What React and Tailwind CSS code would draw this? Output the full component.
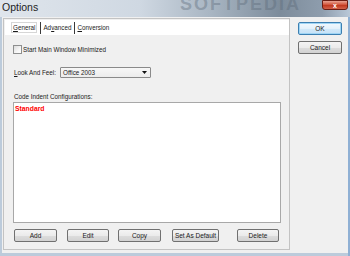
export default function App() {
  const font = { fontFamily: '"Liberation Sans", Arial, sans-serif' };
  const btn =
    "flex items-center justify-center h-[13px] border border-[#707070] rounded-[2px] bg-[linear-gradient(to_bottom,#f4f4f4_0%,#ebebeb_50%,#dddddd_51%,#d2d2d2_100%)] text-[6.5px] text-[#1a1a1a]";
  return (
    <div
      className="w-[350px] h-[256px] overflow-hidden flex flex-col bg-[#bccbdb] relative"
      style={font}
    >
      {/* title bar */}
      <div className="h-[17px] shrink-0 relative bg-[linear-gradient(to_right,#dfe5ec_0%,#cfd8e2_40%,#a9b6c3_60%,#7d8c9b_80%,#8e9dad_92%,#b9c8d8_100%)] overflow-hidden">
        <span className="absolute left-[2px] top-[1px] text-[10.5px] leading-[13px] text-[#1e1e1e]">
          Options
        </span>
        <span className="absolute left-[180px] top-[-5px] text-[18px] font-bold tracking-[2px] text-[#5a6877]/40 leading-[18px]">
          SOFTPEDIA
        </span>
        <div className="absolute left-[322px] top-0 w-[26px] h-[10px] rounded-b-[3px] border border-[#6b1d12] bg-[linear-gradient(to_bottom,#e8a493_0%,#d3563c_45%,#c13a20_55%,#d2624a_100%)] flex items-center justify-center">
          <span className="text-white text-[7px] font-bold leading-[7px]">x</span>
        </div>
      </div>

      {/* client */}
      <div className="flex-1 flex flex-row ml-[2px] mr-[2px] mb-[3px] bg-[#f0f0f0]">
        {/* left panel */}
        <div className="w-[287px] ml-[1px] mt-[1px] mb-[3px] border border-[#c3c3c3] flex flex-col">
          {/* tab strip */}
          <div className="h-[15px] mt-[1px] ml-[1px] bg-white flex items-center text-[6.3px] text-[#1a1a1a]">
            <span className="ml-[6px] px-[1px] border border-[#d6d6d6] leading-[9px]">
              <span className="underline">G</span>eneral
            </span>
            <span className="ml-[3px] w-[1px] h-[12px] bg-[#3a3a3a]" />
            <span className="ml-[2px]">
              Ad<span className="underline">v</span>anced
            </span>
            <span className="ml-[3px] w-[1px] h-[12px] bg-[#3a3a3a]" />
            <span className="ml-[2px]">
              <span className="underline">C</span>onversion
            </span>
          </div>

          {/* content */}
          <div className="flex flex-col pl-[9px] text-[6.3px] text-[#1a1a1a]">
            <div className="mt-[10px] h-[9px] flex items-center">
              <div className="w-[9px] h-[9px] border border-[#8e8f8f] bg-[linear-gradient(135deg,#dcdcdc_0%,#f6f6f6_60%,#ffffff_100%)]" />
              <span className="ml-[1px]">Start Main Window Minimized</span>
            </div>

            <div className="mt-[13px] h-[11px] flex items-center">
              <span className="ml-[1px]">
                <span className="underline">L</span>ook And Feel:
              </span>
              <div className="ml-[4px] w-[91px] h-[11px] border border-[#8a8a8a] rounded-[1px] bg-[linear-gradient(to_bottom,#f7f7f7_0%,#ececec_100%)] flex items-center justify-between px-[2px]">
                <span>Office 2003</span>
                <svg width="5" height="3" viewBox="0 0 5 3" className="mr-[1px]">
                  <path d="M0 0 L5 0 L2.5 3 Z" fill="#111" />
                </svg>
              </div>
            </div>

            <div className="mt-[15px] h-[8px] leading-[8px] ml-[1px]">
              Code Indent Configurations:
            </div>

            <div className="mt-[1px] w-[268px] h-[121px] border border-[#a8a8a8] bg-white">
              <div className="text-[6.8px] font-bold text-[#ff0000] leading-[9px] pl-[1px] mt-[1px]">
                Standard
              </div>
            </div>

            <div className="mt-[6px] flex flex-row">
              <div className={`${btn} w-[43px] ml-[1px]`}>Add</div>
              <div className={`${btn} w-[42px] ml-[10px]`}>Edit</div>
              <div className={`${btn} w-[43px] ml-[9px]`}>Copy</div>
              <div className={`${btn} w-[47px] ml-[11px]`}>Set As Default</div>
              <div className={`${btn} w-[42px] ml-[18px]`}>Delete</div>
            </div>
          </div>
        </div>

        {/* right column */}
        <div className="flex-1 flex flex-col items-start pl-[8px]">
          <div className="mt-[5px] w-[44px] h-[13px] border border-[#3c7fb1] rounded-[2px] bg-[linear-gradient(to_bottom,#f2f9fe_0%,#e3f1fb_50%,#d2e9f9_51%,#c6e2f7_100%)] flex items-center justify-center text-[6.5px] text-[#1a1a1a] shadow-[inset_0_0_0_1px_#9fd5f5]">
            OK
          </div>
          <div className={`${btn} w-[44px] mt-[6px]`}>Cancel</div>
        </div>
      </div>
      <div className="absolute right-0 top-[17px] bottom-0 w-[2px] bg-[#8fb0d4]" />
    </div>
  );
}
